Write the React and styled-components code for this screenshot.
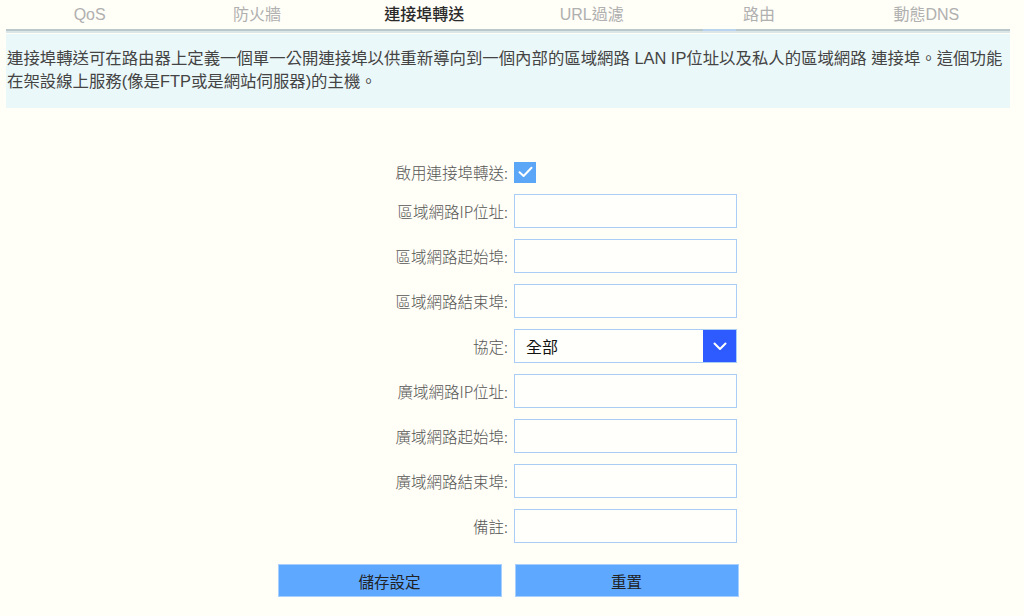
import styled, { createGlobalStyle } from "styled-components";

const GlobalStyle = createGlobalStyle`
  html, body {
    margin: 0;
    padding: 0;
    background: #fffef7;
  }
  body {
    font-family: "Liberation Sans", "Noto Sans CJK TC", sans-serif;
    color: #444;
  }
`;

const tabs = ["QoS", "防火牆", "連接埠轉送", "URL過濾", "路由", "動態DNS"];

const fields = [
  "區域網路IP位址:",
  "區域網路起始埠:",
  "區域網路結束埠:",
  "協定:",
  "廣域網路IP位址:",
  "廣域網路起始埠:",
  "廣域網路結束埠:",
  "備註:",
];

export default function App() {
  return (
    <>
      <GlobalStyle />
      <Page>
        <TabBar>
          {tabs.map((t) => (
            <Tab key={t} $active={t === "連接埠轉送"}>
              {t}
            </Tab>
          ))}
          <Indicator />
        </TabBar>

        <Info>
          連接埠轉送可在路由器上定義一個單一公開連接埠以供重新導向到一個內部的區域網路 LAN
          IP位址以及私人的區域網路 連接埠。這個功能在架設線上服務(像是FTP或是網站伺服器)的主機。
        </Info>

        <Form>
          <Label>啟用連接埠轉送:</Label>
          <Field>
            <Check>
              <svg width="15" height="12" viewBox="0 0 15 12">
                <path d="M1.5 6.2 L5.6 10 L13.5 1.8" fill="none" stroke="#fff" strokeWidth="2" strokeLinecap="round" strokeLinejoin="round" />
              </svg>
            </Check>
          </Field>

          {fields.map((f) => (
            <Row key={f}>
              <Label>{f}</Label>
              <Field>
                {f === "協定:" ? (
                  <Select>
                    <SelectText>全部</SelectText>
                    <SelectArrow>
                      <svg width="14" height="9" viewBox="0 0 14 9">
                        <path d="M1.5 1.5 L7 7 L12.5 1.5" fill="none" stroke="#fff" strokeWidth="2" strokeLinecap="round" strokeLinejoin="round" />
                      </svg>
                    </SelectArrow>
                  </Select>
                ) : (
                  <Input />
                )}
              </Field>
            </Row>
          ))}
        </Form>

        <Buttons>
          <Button>儲存設定</Button>
          <Button>重置</Button>
        </Buttons>
      </Page>
    </>
  );
}

const Page = styled.div`
  width: 1004px;
  margin: 0 6px;
  display: flex;
  flex-direction: column;
`;

const TabBar = styled.div`
  position: relative;
  display: grid;
  grid-template-columns: repeat(6, 1fr);
  height: 29px;
  border-bottom: 2px solid #b9c9cb;
  box-shadow: 0 2px 0 #dde6e6;
`;

const Tab = styled.div`
  text-align: center;
  font-size: 16px;
  line-height: 30px;
  color: ${(p) => (p.$active ? "#2a2a2a" : "#b0b0b0")};
  font-weight: ${(p) => (p.$active ? 500 : 400)};
`;

const Indicator = styled.div`
  position: absolute;
  left: 697px;
  bottom: -2px;
  width: 33px;
  height: 2px;
  background: #b9d4ee;
`;

const Info = styled.div`
  margin-top: 3px;
  background: #ebf8f9;
  padding: 13px 2px 0 1px;
  height: 61px;
  font-size: 16.4px;
  line-height: 23px;
  color: #444;
`;

const Form = styled.div`
  margin: 53px auto 0;
  display: grid;
  grid-template-columns: 230px 224px;
  column-gap: 6px;
  row-gap: 11px;
`;

const Row = styled.div`
  display: contents;
`;

const Label = styled.div`
  text-align: right;
  font-size: 15.5px;
  color: #555;
  align-self: center;
  font-family: "Noto Sans CJK TC", sans-serif;
  font-weight: 300;
`;

const Field = styled.div`
  display: flex;
  align-items: center;
`;

const Check = styled.div`
  width: 22px;
  height: 21px;
  background: #5ba6f7;
  display: flex;
  align-items: center;
  justify-content: center;
`;

const Input = styled.div`
  box-sizing: border-box;
  width: 223px;
  height: 34px;
  border: 1.5px solid #a9cdf4;
  background: #fffffb;
`;

const Select = styled.div`
  box-sizing: border-box;
  width: 223px;
  height: 34px;
  border: 1.5px solid #a9cdf4;
  background: #fffffb;
  display: flex;
  align-items: stretch;
`;

const SelectText = styled.div`
  flex: 1;
  padding-left: 11px;
  display: flex;
  align-items: center;
  font-size: 16px;
  color: #111;
  font-family: "Noto Sans CJK TC", sans-serif;
`;

const SelectArrow = styled.div`
  width: 33px;
  background: #2d5bff;
  display: flex;
  align-items: center;
  justify-content: center;
`;

const Buttons = styled.div`
  margin: 21px auto 0;
  display: flex;
  gap: 13px;
`;

const Button = styled.div`
  width: 224px;
  height: 33px;
  background: #5ea8ff;
  border: 1px solid #a8d0ff;
  box-sizing: border-box;
  display: flex;
  align-items: center;
  justify-content: center;
  font-size: 15.5px;
  color: #222;
  font-family: "Noto Sans CJK TC", sans-serif;
  font-weight: 400;
`;
